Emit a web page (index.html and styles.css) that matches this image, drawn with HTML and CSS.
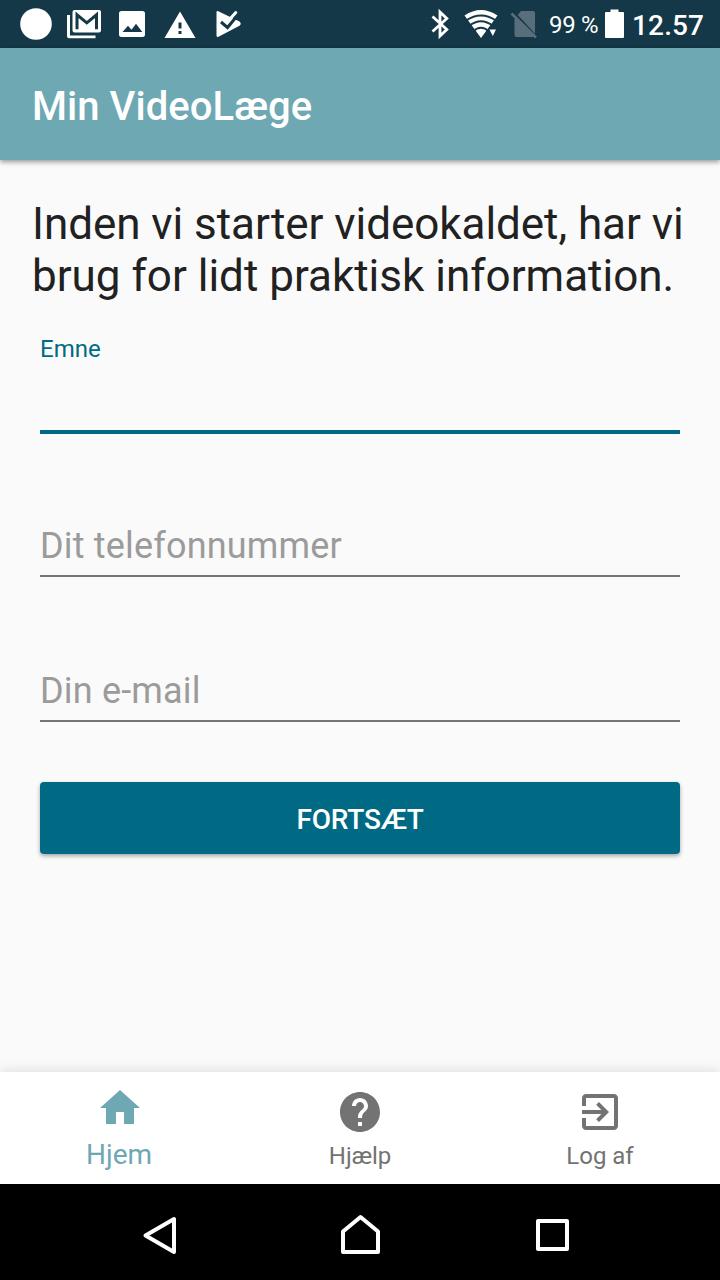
FILE: index.html
```html
<!DOCTYPE html>
<html lang="da">
<head>
<meta charset="utf-8">
<title>Min VideoLæge</title>
<link rel="stylesheet" href="styles.css">
</head>
<body>
<div class="screen">
  <div class="status">
    <div class="notifications">
      <svg class="glyph" viewBox="0 0 32 32"><circle cx="16" cy="16" r="15.8"/></svg>
      <svg class="glyph" viewBox="0 0 32 32">
        <path d="M-1 7h3v20.500h25.500v2.700H1a2 2 0 0 1-2-2z"/>
        <rect x="4.500" y="2" width="28.500" height="22.500" rx="2"/>
        <path class="ink" d="M9 21.200V6.800l9.800 8.100 9.700-8.100v14.400"/>
      </svg>
      <svg class="glyph" viewBox="0 0 32 32"><path d="M5.500 3h21A2.500 2.500 0 0 1 29 5.500v21a2.500 2.500 0 0 1-2.500 2.500h-21A2.500 2.500 0 0 1 3 26.500v-21A2.500 2.500 0 0 1 5.500 3zM6.500 24h19.800l-6.300-8.300-4.500 6-3.500-4z" fill-rule="evenodd"/></svg>
      <svg class="glyph" viewBox="0 0 32 32"><path fill-rule="evenodd" d="M16 3.500L31.500 30h-31zM14.500 14.500v6h3v-6zM14.500 23v3h3v-3z"/></svg>
      <svg class="glyph" viewBox="0 0 32 32">
        <path d="M4.500 4.200Q4.500 2.300 6.300 3.200L27.500 13.500Q30 16 27.500 17.800L6.500 28.700Q4.500 29.500 4.500 27.500z"/>
        <path class="cut" d="M9 14l6.500 5.500L27 5.500"/>
        <path class="tick" d="M17.500 11.500L23.800 4.500"/>
      </svg>
    </div>
    <div class="system">
      <svg class="bluetooth" viewBox="0 0 20 32"><path d="M2.500 8.500l14.300 13L10 28V4l6.800 6.500-14.300 13"/></svg>
      <svg class="wifi" viewBox="0 0 34 32">
        <path d="M.5 7.500Q17-3.500 33.500 7.500L17 30z"/>
        <path class="gap" d="M2 12.500Q17 2.500 32 12.500M5 18q12-9.500 24 0M9 23.500q8-7.500 16 0"/>
        <path class="mark" d="M25.500 21.500h6.500l-3.200 6.500z"/>
      </svg>
      <svg class="sim" viewBox="0 0 26 32"><path d="M3.500 11L10 3h12a2 2 0 0 1 2 2v22.500a1.500 1.500 0 0 1-1.500 1.500h-17a2 2 0 0 1-2-2z"/><path class="gap" d="M1 3l25 27"/><path class="slash" d="M.5 5.500L25 29.500"/></svg>
      <span class="percent">99 %</span>
      <svg class="battery" viewBox="0 0 19 32"><path d="M1 4h4.500V1.500h8V4H18a1 1 0 0 1 1 1v24a1 1 0 0 1-1 1H1a1 1 0 0 1-1-1V5a1 1 0 0 1 1-1z"/></svg>
      <span class="clock">12.57</span>
    </div>
  </div>

  <header class="appbar"><h1 class="title">Min VideoLæge</h1></header>

  <main class="content">
    <p class="intro"><span class="tight">Inden vi starter videokaldet, har vi</span><br>brug for lidt praktisk information.</p>
    <form class="form">
      <div class="field active"><span>Emne</span></div>
      <div class="field"><span>Dit telefonnummer</span></div>
      <div class="field"><span>Din e-mail</span></div>
      <button class="submit" type="button">FORTSÆT</button>
    </form>
  </main>

  <nav class="tabs">
    <div class="tab selected">
      <svg class="tab-icon" viewBox="0 0 24 24"><path d="M10 20v-6h4v6h5v-8h3L12 3 2 12h3v8z"/></svg>
      <span class="tab-label">Hjem</span>
    </div>
    <div class="tab">
      <svg class="tab-icon" viewBox="0 0 24 24"><path d="M12 2C6.480 2 2 6.480 2 12s4.480 10 10 10 10-4.480 10-10S17.520 2 12 2zm1 17h-2v-2h2v2zm2.070-7.750l-.9.920C13.450 12.900 13 13.500 13 15h-2v-.5c0-1.100.45-2.100 1.170-2.830l1.240-1.260c.37-.36.590-.86.590-1.410 0-1.100-.9-2-2-2s-2 .9-2 2H8c0-2.210 1.790-4 4-4s4 1.790 4 4c0 .88-.36 1.680-.93 2.250z"/></svg>
      <span class="tab-label">Hjælp</span>
    </div>
    <div class="tab">
      <svg class="tab-icon" viewBox="0 0 24 24"><path d="M10.090 15.590L11.500 17l5-5-5-5-1.410 1.410L12.670 11H3v2h9.670l-2.580 2.590zM19 3H5c-1.110 0-2 .9-2 2v4h2V5h14v14H5v-4H3v4c0 1.100.89 2 2 2h14c1.100 0 2-.9 2-2V5c0-1.100-.9-2-2-2z"/></svg>
      <span class="tab-label">Log af</span>
    </div>
  </nav>

  <div class="softkeys">
    <svg class="key" viewBox="0 0 48 48"><path d="M1.500 23.500L30 7v33z"/></svg>
    <svg class="key" viewBox="0 0 48 48"><path d="M7 19.500L24.500 5 42 19.500V40H7z"/></svg>
    <svg class="key" viewBox="0 0 48 48"><path d="M10 9h29v28H10z"/></svg>
  </div>
</div>
</body>
</html>
```
FILE: styles.css
```css
* { box-sizing: border-box; }
body { margin: 0; font-family: Roboto, sans-serif; background: #fafafa; }
.screen { width: 720px; height: 1280px; display: flex; flex-direction: column; overflow: hidden; }
svg { display: block; flex: none; }

.status { height: 48px; flex: none; background: #143847; display: flex; justify-content: space-between; align-items: center; padding: 0 16px 0 20px; color: #fff; }
.notifications { display: flex; gap: 16px; }
.glyph { width: 32px; height: 32px; fill: #fff; overflow: visible; }
.glyph .ink { fill: none; stroke: #143847; stroke-width: 3; }
.glyph .cut { fill: none; stroke: #143847; stroke-width: 3; }
.glyph .tick { fill: none; stroke: #fff; stroke-width: 3; stroke-linecap: round; }
.system { display: flex; align-items: center; height: 48px; }
.bluetooth { width: 20px; height: 32px; fill: none; stroke: #fff; stroke-width: 2.8; margin-right: 14px; }
.wifi { width: 34px; height: 32px; fill: #fff; margin-right: 13px; }
.wifi .gap { fill: none; stroke: #143847; stroke-width: 1.8; }
.wifi .mark { stroke: #143847; stroke-width: 2; paint-order: stroke; }
.sim { width: 26px; height: 32px; fill: #586f7b; overflow: visible; margin-right: 12px; }
.sim .gap { fill: none; stroke: #143847; stroke-width: 3; }
.sim .slash { fill: none; stroke: #586f7b; stroke-width: 2.5; }
.percent { width: 56px; font-size: 24px; line-height: 28px; padding-top: 2px; letter-spacing: -.3px; white-space: nowrap; }
.battery { width: 19px; height: 32px; fill: #fff; margin: 0 8px 0 0; }
.clock { width: 72px; font-size: 28px; font-weight: 500; line-height: 32px; padding-top: 4px; letter-spacing: .15px; white-space: nowrap; }

.appbar { position: relative; height: 112px; flex: none; padding: 35px 32px 0; background: #6da8b3; box-shadow: 0 2px 5px rgba(0,0,0,.4); }
.title { margin: 0; font-size: 40px; line-height: 48px; font-weight: 500; letter-spacing: .05px; color: #fff; }

.content { flex: 1; padding: 38px 32px 0; }
.intro { margin: 0; font-size: 44px; line-height: 52px; color: #212121; white-space: nowrap; }
.tight { letter-spacing: -.05px; }
.form { display: flex; flex-direction: column; padding: 33px 8px 0; }
.field { height: 52px; margin-bottom: 93px; border-bottom: 2px solid #757575; color: #9b9b9b; font-size: 36px; line-height: 42px; letter-spacing: .18px; }
.field.active { height: 99px; margin-bottom: 91px; border-bottom: 4px solid #006a84; color: #006a84; font-size: 24px; line-height: 28px; letter-spacing: 0; }
.submit { height: 72px; margin-top: -33px; padding: 3px 0 0; border: 0; border-radius: 4px; background: #006a84; color: #fff; font: 500 28px/69px Roboto, sans-serif; letter-spacing: -.2px; box-shadow: 0 2px 4px rgba(0,0,0,.35); }

.tabs { height: 112px; flex: none; display: grid; grid-template-columns: repeat(3, 1fr); background: #fff; box-shadow: 0 -1px 12px rgba(0,0,0,.12); }
.tab { display: flex; flex-direction: column; align-items: center; gap: 6px; padding-top: 16px; color: #737373; font-size: 24px; line-height: 28px; }
.tab.selected { gap: 7px; padding-top: 12px; color: #6da8b3; font-size: 28px; line-height: 32px; }
.tab.selected .tab-label { margin-right: 2px; }
.tab-icon { width: 48px; height: 48px; fill: currentColor; }

.softkeys { height: 96px; flex: none; display: flex; justify-content: center; gap: 144px; padding-top: 28px; background: #000; position: relative; }
.key { width: 48px; height: 48px; fill: none; stroke: #fff; stroke-width: 4; stroke-linejoin: round; overflow: visible; }
```
